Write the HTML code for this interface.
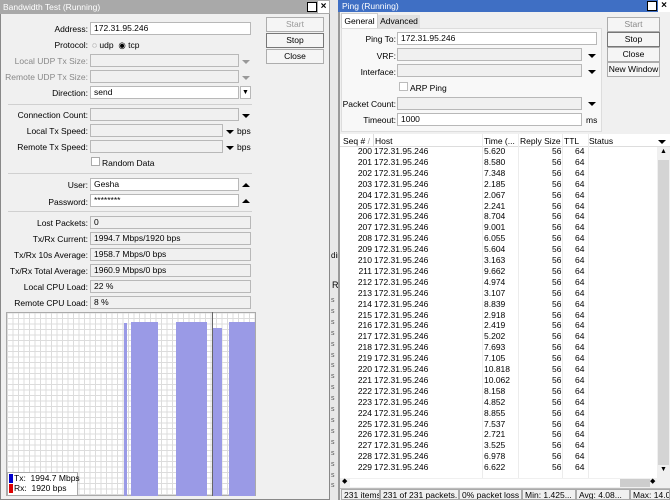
<!DOCTYPE html><html><head><style>
*{margin:0;padding:0;box-sizing:border-box}
body{width:670px;height:500px;overflow:hidden;background:#f0f0f0;font-family:"Liberation Sans",sans-serif;font-size:8.5px;color:#000;position:relative}
.a{position:absolute;white-space:nowrap}
.lbl{position:absolute;text-align:right;white-space:nowrap}
.f{position:absolute;background:#fff;border:1px solid #b8b8b8;height:13px;padding-left:3px;line-height:11px;white-space:nowrap}
.fd{background:#f0f0f0}
.btn{position:absolute;border:1px solid #adadad;background:#f5f5f5;text-align:center;line-height:13px;white-space:nowrap}
.arr{position:absolute;width:0;height:0;border-left:4px solid transparent;border-right:4px solid transparent;border-top:4px solid #000}
.arrg{border-top-color:#999}
.arru{border-top:none;border-bottom:4px solid #000}
.sep{position:absolute;height:1px;background:#d0d0d0}
.row{position:absolute;left:341px;width:316px;height:11px;line-height:11px;white-space:nowrap}
.row span{position:absolute}
.st{position:absolute;top:489px;height:11px;border:1px solid #aaa;padding-left:2px;line-height:10px;white-space:nowrap;overflow:hidden}
</style></head><body>
<div class="a" style="left:329px;top:0;width:9px;height:500px;background:#e8e8e8;border-left:1px solid #999"></div>
<div class="a" style="left:331px;top:251px;font-size:8px">din</div>
<div class="a" style="left:332px;top:280px;font-size:9px">R</div>
<div class="a" style="left:331px;top:296px;width:6px;height:200px;color:#555;font-size:7px;line-height:10.9px;white-space:normal">s<br>s<br>s<br>s<br>s<br>s<br>s<br>s<br>s<br>s<br>s<br>s<br>s<br>s<br>s<br>s<br>s<br>s</div>

<div class="a" style="left:0;top:0;width:330px;height:500px;background:#f0f0f0;border:1px solid #888"></div>
<div class="a" style="left:0;top:0;width:330px;height:14px;background:#a9a9a9;color:#fff;padding-left:3px;line-height:14px">Bandwidth Test (Running)</div>
<div class="a" style="left:307px;top:2px;width:10px;height:10px;background:#fff;border:1px solid #000"></div>
<div class="a" style="left:318px;top:1px;width:11px;height:12px;background:#fff;color:#000;font-weight:bold;text-align:center;line-height:12px;font-size:10px">×</div>

<div class="lbl" style="right:582px;top:24px">Address:</div><div class="f" style="left:90px;top:22px;width:161px">172.31.95.246</div>
<div class="lbl" style="right:582px;top:40px">Protocol:</div><div class="a" style="left:92px;top:40px">◌ udp &nbsp;◉ tcp</div>
<div class="lbl" style="right:582px;top:56px;color:#888">Local UDP Tx Size:</div><div class="f fd" style="left:90px;top:54px;width:149px"></div><div class="arr arrg" style="left:242px;top:60px"></div>
<div class="lbl" style="right:582px;top:72px;color:#888">Remote UDP Tx Size:</div><div class="f fd" style="left:90px;top:70px;width:149px"></div><div class="arr arrg" style="left:242px;top:76px"></div>
<div class="lbl" style="right:582px;top:88px">Direction:</div><div class="f" style="left:90px;top:86px;width:149px">send</div><div class="f" style="left:240px;top:86px;width:11px;padding:0;text-align:center;font-size:7px">▼</div>
<div class="sep" style="left:8px;top:104px;width:244px"></div>
<div class="lbl" style="right:582px;top:110px">Connection Count:</div><div class="f fd" style="left:90px;top:108px;width:149px"></div><div class="arr" style="left:242px;top:114px"></div>
<div class="lbl" style="right:582px;top:126px">Local Tx Speed:</div><div class="f fd" style="left:90px;top:124px;width:133px"></div><div class="arr" style="left:226px;top:130px"></div><div class="a" style="left:237px;top:126px">bps</div>
<div class="lbl" style="right:582px;top:142px">Remote Tx Speed:</div><div class="f fd" style="left:90px;top:140px;width:133px"></div><div class="arr" style="left:226px;top:146px"></div><div class="a" style="left:237px;top:142px">bps</div>
<div class="a" style="left:91px;top:157px;width:9px;height:9px;background:#fff;border:1px solid #aaa"></div><div class="a" style="left:102px;top:158px">Random Data</div>
<div class="sep" style="left:8px;top:173px;width:244px"></div>
<div class="lbl" style="right:582px;top:180px">User:</div><div class="f" style="left:90px;top:178px;width:149px">Gesha</div><div class="arr arru" style="left:242px;top:183px"></div>
<div class="lbl" style="right:582px;top:197px">Password:</div><div class="f" style="left:90px;top:194px;width:149px">********</div><div class="arr arru" style="left:242px;top:199px"></div>
<div class="sep" style="left:8px;top:211px;width:244px"></div>
<div class="lbl" style="right:582px;top:218px">Lost Packets:</div><div class="f fd" style="left:90px;top:216px;width:161px">0</div>
<div class="lbl" style="right:582px;top:234px">Tx/Rx Current:</div><div class="f fd" style="left:90px;top:232px;width:161px">1994.7 Mbps/1920 bps</div>
<div class="lbl" style="right:582px;top:250px">Tx/Rx 10s Average:</div><div class="f fd" style="left:90px;top:248px;width:161px">1958.7 Mbps/0 bps</div>
<div class="lbl" style="right:582px;top:266px">Tx/Rx Total Average:</div><div class="f fd" style="left:90px;top:264px;width:161px">1960.9 Mbps/0 bps</div>
<div class="lbl" style="right:582px;top:282px">Local CPU Load:</div><div class="f fd" style="left:90px;top:280px;width:161px">22 %</div>
<div class="lbl" style="right:582px;top:298px">Remote CPU Load:</div><div class="f fd" style="left:90px;top:296px;width:161px">8 %</div>

<div class="btn" style="left:266px;top:17px;width:58px;color:#999">Start</div>
<div class="btn" style="left:266px;top:33px;width:58px;border-color:#777">Stop</div>
<div class="btn" style="left:266px;top:49px;width:58px">Close</div>

<div class="a" style="left:6px;top:312px;width:250px;height:184px;border:1px solid #aaa;background-color:#fff;background-image:repeating-linear-gradient(90deg,#dcdcdc 0 1px,transparent 1px 5.5px),repeating-linear-gradient(0deg,#dcdcdc 0 1px,transparent 1px 5.5px)"></div>
<div class="a" style="left:124px;top:323px;width:3px;height:173px;background:#9a9ae6"></div>
<div class="a" style="left:131px;top:322px;width:27px;height:174px;background:#9a9ae6"></div>
<div class="a" style="left:176px;top:322px;width:31px;height:174px;background:#9a9ae6"></div>
<div class="a" style="left:213px;top:328px;width:9px;height:168px;background:#9a9ae6"></div>
<div class="a" style="left:212px;top:312px;width:1px;height:184px;background:#666"></div>
<div class="a" style="left:229px;top:322px;width:26px;height:174px;background:#9a9ae6"></div>
<div class="a" style="left:7px;top:472px;width:71px;height:24px;background:#fff;border:1px solid #aaa"></div>
<div class="a" style="left:9px;top:474px;width:4px;height:9px;background:#00c"></div>
<div class="a" style="left:9px;top:484px;width:4px;height:9px;background:#d00"></div>
<div class="a" style="left:14px;top:473px;line-height:10px">Tx:&nbsp; 1994.7 Mbps<br>Rx:&nbsp; 1920 bps</div>

<div class="a" style="left:338px;top:0;width:332px;height:500px;background:#f0f0f0;border-left:2px solid #999"></div>
<div class="a" style="left:338px;top:0;width:332px;height:12px;background:#3f6fc4;color:#fff;padding-left:4px;line-height:12px">Ping (Running)</div>
<div class="a" style="left:647px;top:1px;width:10px;height:10px;background:#fff;border:1px solid #000"></div>
<div class="a" style="left:658px;top:0;width:12px;height:12px;background:#fff;font-weight:bold;text-align:center;line-height:12px;font-size:10px">×</div>
<div class="a" style="left:341px;top:13px;width:37px;height:15px;background:#fff;border:1px solid #ccc;border-bottom:none;text-align:center;line-height:14px">General</div>
<div class="a" style="left:378px;top:15px;width:42px;height:13px;background:#e0e0e0;text-align:center;line-height:13px">Advanced</div>
<div class="a" style="left:341px;top:28px;width:261px;height:104px;background:#f8f8f8;border:1px solid #ddd"></div>
<div class="lbl" style="right:274px;top:34px">Ping To:</div><div class="f" style="left:397px;top:32px;width:200px">172.31.95.246</div>
<div class="lbl" style="right:274px;top:51px">VRF:</div><div class="f fd" style="left:397px;top:48px;width:185px"></div><div class="arr" style="left:588px;top:54px"></div>
<div class="lbl" style="right:274px;top:67px">Interface:</div><div class="f fd" style="left:397px;top:64px;width:185px"></div><div class="arr" style="left:588px;top:70px"></div>
<div class="a" style="left:399px;top:82px;width:9px;height:9px;background:#fff;border:1px solid #bbb"></div><div class="a" style="left:410px;top:83px">ARP Ping</div>
<div class="lbl" style="right:274px;top:99px">Packet Count:</div><div class="f fd" style="left:397px;top:97px;width:185px"></div><div class="arr" style="left:588px;top:102px"></div>
<div class="lbl" style="right:274px;top:115px">Timeout:</div><div class="f" style="left:397px;top:113px;width:185px">1000</div><div class="a" style="left:586px;top:115px">ms</div>
<div class="btn" style="left:607px;top:17px;width:53px;color:#888">Start</div>
<div class="btn" style="left:607px;top:32px;width:53px;border-color:#777">Stop</div>
<div class="btn" style="left:607px;top:47px;width:53px">Close</div>
<div class="btn" style="left:607px;top:62px;width:53px">New Window</div>

<div class="a" style="left:340px;top:134px;width:330px;height:345px;background:#fff"></div>
<div class="a" style="left:340px;top:134px;width:330px;height:13px;background:#fff;border-bottom:1px solid #ddd"></div>
<div class="a" style="left:343px;top:136px">Seq # <span style="color:#999">/</span></div>
<div class="a" style="left:375px;top:136px">Host</div>
<div class="a" style="left:484px;top:136px">Time (...</div>
<div class="a" style="left:520px;top:136px">Reply Size</div>
<div class="a" style="left:564px;top:136px">TTL</div>
<div class="a" style="left:589px;top:136px">Status</div>
<div class="a" style="left:373px;top:134px;width:1px;height:13px;background:#ddd"></div>
<div class="a" style="left:482px;top:134px;width:1px;height:345px;background:#ececec"></div>
<div class="a" style="left:518px;top:134px;width:1px;height:345px;background:#ececec"></div>
<div class="a" style="left:562px;top:134px;width:1px;height:345px;background:#ececec"></div>
<div class="a" style="left:588px;top:134px;width:1px;height:345px;background:#ececec"></div>
<div class="arr" style="left:658px;top:140px"></div>
<div class="a" style="left:657px;top:147px;width:13px;height:331px;background:#f0f0f0"></div>
<div class="a" style="left:658px;top:160px;width:11px;height:305px;background:#d4d4d4"></div>
<div class="a" style="left:660px;top:148px;font-size:7px">▲</div>
<div class="a" style="left:660px;top:466px;font-size:7px">▼</div>
<div class="a" style="left:340px;top:478px;width:330px;height:10px;background:#f0f0f0"></div>
<div class="a" style="left:350px;top:479px;width:270px;height:8px;background:#fff"></div>
<div class="a" style="left:620px;top:479px;width:30px;height:8px;background:#cdcdcd"></div>
<div class="a" style="left:342px;top:477px;font-size:7px">◆</div>
<div class="a" style="left:650px;top:477px;font-size:7px">◆</div>
<div class="a" style="left:340px;top:488px;width:330px;height:12px;background:#f0f0f0;border-top:1px solid #bbb"></div>
<div class="st" style="left:341px;width:39px">231 items</div>
<div class="st" style="left:380px;width:79px">231 of 231 packets...</div>
<div class="st" style="left:459px;width:63px">0% packet loss</div>
<div class="st" style="left:522px;width:54px">Min: 1.425...</div>
<div class="st" style="left:576px;width:54px">Avg: 4.08...</div>
<div class="st" style="left:630px;width:40px">Max: 14.00...</div>

<div class="row" style="top:146.0px"><span style="right:285px">200</span><span style="left:33px">172.31.95.246</span><span style="left:143px">5.620</span><span style="left:211px">56</span><span style="left:234px">64</span></div>
<div class="row" style="top:156.9px"><span style="right:285px">201</span><span style="left:33px">172.31.95.246</span><span style="left:143px">8.580</span><span style="left:211px">56</span><span style="left:234px">64</span></div>
<div class="row" style="top:167.8px"><span style="right:285px">202</span><span style="left:33px">172.31.95.246</span><span style="left:143px">7.348</span><span style="left:211px">56</span><span style="left:234px">64</span></div>
<div class="row" style="top:178.7px"><span style="right:285px">203</span><span style="left:33px">172.31.95.246</span><span style="left:143px">2.185</span><span style="left:211px">56</span><span style="left:234px">64</span></div>
<div class="row" style="top:189.6px"><span style="right:285px">204</span><span style="left:33px">172.31.95.246</span><span style="left:143px">2.067</span><span style="left:211px">56</span><span style="left:234px">64</span></div>
<div class="row" style="top:200.5px"><span style="right:285px">205</span><span style="left:33px">172.31.95.246</span><span style="left:143px">2.241</span><span style="left:211px">56</span><span style="left:234px">64</span></div>
<div class="row" style="top:211.4px"><span style="right:285px">206</span><span style="left:33px">172.31.95.246</span><span style="left:143px">8.704</span><span style="left:211px">56</span><span style="left:234px">64</span></div>
<div class="row" style="top:222.3px"><span style="right:285px">207</span><span style="left:33px">172.31.95.246</span><span style="left:143px">9.001</span><span style="left:211px">56</span><span style="left:234px">64</span></div>
<div class="row" style="top:233.2px"><span style="right:285px">208</span><span style="left:33px">172.31.95.246</span><span style="left:143px">6.055</span><span style="left:211px">56</span><span style="left:234px">64</span></div>
<div class="row" style="top:244.1px"><span style="right:285px">209</span><span style="left:33px">172.31.95.246</span><span style="left:143px">5.604</span><span style="left:211px">56</span><span style="left:234px">64</span></div>
<div class="row" style="top:255.0px"><span style="right:285px">210</span><span style="left:33px">172.31.95.246</span><span style="left:143px">3.163</span><span style="left:211px">56</span><span style="left:234px">64</span></div>
<div class="row" style="top:265.9px"><span style="right:285px">211</span><span style="left:33px">172.31.95.246</span><span style="left:143px">9.662</span><span style="left:211px">56</span><span style="left:234px">64</span></div>
<div class="row" style="top:276.8px"><span style="right:285px">212</span><span style="left:33px">172.31.95.246</span><span style="left:143px">4.974</span><span style="left:211px">56</span><span style="left:234px">64</span></div>
<div class="row" style="top:287.7px"><span style="right:285px">213</span><span style="left:33px">172.31.95.246</span><span style="left:143px">3.107</span><span style="left:211px">56</span><span style="left:234px">64</span></div>
<div class="row" style="top:298.6px"><span style="right:285px">214</span><span style="left:33px">172.31.95.246</span><span style="left:143px">8.839</span><span style="left:211px">56</span><span style="left:234px">64</span></div>
<div class="row" style="top:309.5px"><span style="right:285px">215</span><span style="left:33px">172.31.95.246</span><span style="left:143px">2.918</span><span style="left:211px">56</span><span style="left:234px">64</span></div>
<div class="row" style="top:320.4px"><span style="right:285px">216</span><span style="left:33px">172.31.95.246</span><span style="left:143px">2.419</span><span style="left:211px">56</span><span style="left:234px">64</span></div>
<div class="row" style="top:331.3px"><span style="right:285px">217</span><span style="left:33px">172.31.95.246</span><span style="left:143px">5.202</span><span style="left:211px">56</span><span style="left:234px">64</span></div>
<div class="row" style="top:342.2px"><span style="right:285px">218</span><span style="left:33px">172.31.95.246</span><span style="left:143px">7.693</span><span style="left:211px">56</span><span style="left:234px">64</span></div>
<div class="row" style="top:353.1px"><span style="right:285px">219</span><span style="left:33px">172.31.95.246</span><span style="left:143px">7.105</span><span style="left:211px">56</span><span style="left:234px">64</span></div>
<div class="row" style="top:364.0px"><span style="right:285px">220</span><span style="left:33px">172.31.95.246</span><span style="left:143px">10.818</span><span style="left:211px">56</span><span style="left:234px">64</span></div>
<div class="row" style="top:374.9px"><span style="right:285px">221</span><span style="left:33px">172.31.95.246</span><span style="left:143px">10.062</span><span style="left:211px">56</span><span style="left:234px">64</span></div>
<div class="row" style="top:385.8px"><span style="right:285px">222</span><span style="left:33px">172.31.95.246</span><span style="left:143px">8.158</span><span style="left:211px">56</span><span style="left:234px">64</span></div>
<div class="row" style="top:396.7px"><span style="right:285px">223</span><span style="left:33px">172.31.95.246</span><span style="left:143px">4.852</span><span style="left:211px">56</span><span style="left:234px">64</span></div>
<div class="row" style="top:407.6px"><span style="right:285px">224</span><span style="left:33px">172.31.95.246</span><span style="left:143px">8.855</span><span style="left:211px">56</span><span style="left:234px">64</span></div>
<div class="row" style="top:418.5px"><span style="right:285px">225</span><span style="left:33px">172.31.95.246</span><span style="left:143px">7.537</span><span style="left:211px">56</span><span style="left:234px">64</span></div>
<div class="row" style="top:429.4px"><span style="right:285px">226</span><span style="left:33px">172.31.95.246</span><span style="left:143px">2.721</span><span style="left:211px">56</span><span style="left:234px">64</span></div>
<div class="row" style="top:440.3px"><span style="right:285px">227</span><span style="left:33px">172.31.95.246</span><span style="left:143px">3.525</span><span style="left:211px">56</span><span style="left:234px">64</span></div>
<div class="row" style="top:451.2px"><span style="right:285px">228</span><span style="left:33px">172.31.95.246</span><span style="left:143px">6.978</span><span style="left:211px">56</span><span style="left:234px">64</span></div>
<div class="row" style="top:462.1px"><span style="right:285px">229</span><span style="left:33px">172.31.95.246</span><span style="left:143px">6.622</span><span style="left:211px">56</span><span style="left:234px">64</span></div>
</body></html>
